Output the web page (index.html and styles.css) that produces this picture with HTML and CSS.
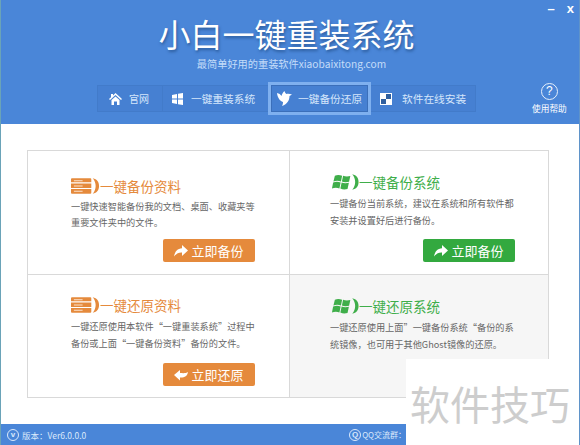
FILE: index.html
```html
<!DOCTYPE html>
<html lang="zh-CN">
<head>
  <meta charset="UTF-8">
  <title>小白一键重装系统</title>
  <link rel="stylesheet" href="styles.css">
</head>
<body>
  <svg class="sprites" width="0" height="0">
    <symbol id="ico-drive" viewBox="0 0 30 16">
      <path d="M1 0h19a1 1 0 0 1 1 1v3H0V1a1 1 0 0 1 1-1zM0 5.500h21V10H0zM0 11h21v4a1 1 0 0 1-1 1H1a1 1 0 0 1-1-1z" fill="#e58a3c"/>
      <path d="M3 2h9v1H3zM3 7.500h9v1H3zM3 13h9v1H3z" fill="#fbe3cd"/>
      <path d="M22.500 0c4.500 1 6.500 4 6.500 8s-2 7-6.500 8c2-2.500 3-5 3-8s-1-5.500-3-8z" fill="#e58a3c"/>
    </symbol>
    <symbol id="ico-flag" viewBox="0 0 30 16">
      <path d="M4 1.500c2.500-1.200 5-1 7.500 0l-1.200 6c-2.300-1-5-1.200-7.800 0zM12.500 1.500c2.300 1 5 1 7.500.3l-1.300 6c-2.500.7-5.400.7-7.400-.3zM2.200 8.500c2.800-1.200 5.500-1 7.800 0l-1.300 6.200c-2-1-5-1.200-7.700 0zM11 8.500c2 1 5 1 7.500.3l-1.400 6.400c-2.500.7-5.300.6-7.400-.5z" fill="#3fae4a"/>
      <path d="M22 0c4.500 1 6.500 4 6.500 8s-2 7-6.500 8c2-2.500 3-5 3-8s-1-5.500-3-8z" fill="#3fae4a"/>
    </symbol>
    <symbol id="ico-go" viewBox="0 0 14 12">
      <path d="M8 0l6 5.500L8 11V7.500C5 7.300 2.500 8.500 0 11.500 .8 6.500 3.500 3.500 8 3.200z" fill="#fff"/>
    </symbol>
    <symbol id="ico-back" viewBox="0 0 14 12">
      <path d="M6 1v3c3 .2 6 .5 8-1-.6 4-3.500 5.800-8 5.500V11.500L0 6z" fill="#fff"/>
    </symbol>
  </svg>

  <div class="window">
    <header class="top">
      <div class="win-btns"><span>–</span><span>x</span></div>
      <h1 class="logo">小白一键重装系统</h1>
      <p class="slogan">最简单好用的重装软件xiaobaixitong.com</p>
      <div class="nav-row">
        <nav class="nav">
          <a class="tab tab-home">
            <svg width="13" height="12" viewBox="0 0 13 12"><path d="M6.500 0L13 6l-1 1-5.500-5L1 7 0 6l2-1.800V1h2v1.400zM2.500 7l4-3.600 4 3.600v5H8V8.500H5V12H2.500z" fill="#fff"/></svg>
            官网
          </a>
          <a class="tab tab-sys">
            <svg width="11" height="12" viewBox="0 0 11 12"><path d="M0 2l5-1v4.500H0zM6 .8L11 0v5.500H6zM0 6.500h5V11l-5-1zM6 6.500h5V12l-5-.8z" fill="#fff"/></svg>
            一键重装系统
          </a>
          <a class="tab tab-active">
            <svg width="15" height="15" viewBox="0 0 15 15"><path d="M0 2c2 .4 3.500 1.400 4.500 3C5 3 6 1 7.500 0c.3 1.500 1 2.400 2 3 1.500-.4 3.500-.2 5.500.5l-2.500 1.500C12.500 9 10.500 13 5 15c.8-1.300 1-2.500 1-4C2.800 10 .5 6.500 0 2z" fill="#fff"/></svg>
            一键备份还原
          </a>
          <a class="tab tab-soft">
            <span class="checker"></span>
            软件在线安装
          </a>
        </nav>
        <div class="help">
          <span class="help-ico">?</span>
          <span class="help-txt">使用帮助</span>
        </div>
      </div>
    </header>

    <main class="main">
      <div class="board">
        <section class="cell cell-a">
          <h2 class="cell-title orange"><svg class="title-ico"><use href="#ico-drive"/></svg>一键备份资料</h2>
          <p class="cell-text">一键快速智能备份我的文档、桌面、收藏夹等<br>重要文件夹中的文件。</p>
          <a class="btn btn-orange"><svg width="14" height="12"><use href="#ico-go"/></svg>立即备份</a>
        </section>
        <section class="cell cell-b">
          <h2 class="cell-title green"><svg class="title-ico"><use href="#ico-flag"/></svg>一键备份系统</h2>
          <p class="cell-text">一键备份当前系统，建议在系统和所有软件都<br>安装并设置好后进行备份。</p>
          <a class="btn btn-green"><svg width="14" height="12"><use href="#ico-go"/></svg>立即备份</a>
        </section>
        <section class="cell cell-c">
          <h2 class="cell-title orange"><svg class="title-ico"><use href="#ico-drive"/></svg>一键还原资料</h2>
          <p class="cell-text">一键还原使用本软件“一键重装系统”过程中<br>备份或上面“一键备份资料”备份的文件。</p>
          <a class="btn btn-orange"><svg width="14" height="12"><use href="#ico-back"/></svg>立即还原</a>
        </section>
        <section class="cell cell-d">
          <h2 class="cell-title green"><svg class="title-ico"><use href="#ico-flag"/></svg>一键还原系统</h2>
          <p class="cell-text">一键还原使用上面”一键备份系统“备份的系<br>统镜像，也可用于其他Ghost镜像的还原。</p>
        </section>
      </div>
    </main>

    <footer class="bottom">
      <span class="ver"><i class="ring">v</i>版本：Ver6.0.0.0</span>
      <span class="qq"><i class="ring">Q</i>QQ交流群：</span>
    </footer>

    <!-- watermark pasted over the corner -->
    <div class="stamp">软件技巧</div>
  </div>
</body>
</html>
```

FILE: styles.css
```css
* {
    box-sizing: border-box;
}

body {
    margin: 0;
    font-family: "Noto Sans CJK SC", "Liberation Sans", sans-serif;
    background: #fff;
}

h1, h2, p {
    margin: 0;
    font-weight: normal;
}

.sprites {
    position: absolute;
}

.window {
    position: relative;
    width: 580px;
    height: 445px;
    display: flex;
    flex-direction: column;
    overflow: hidden;
    border-left: 1px solid #6aa3b8;
    border-right: 1px solid #5f93c9;
}

/* header */
.top {
    position: relative;
    height: 124px;
    margin: 0 -1px;
    padding-top: 14px;
    background: #4a86d8;
    color: #fff;
    text-align: center;
}

.win-btns {
    position: absolute;
    top: 1px;
    right: 6px;
    display: flex;
    gap: 12px;
    font: bold 13px "Liberation Sans", sans-serif;
    line-height: 16px;
}

.logo {
    font-size: 32px;
    line-height: 38px;
    padding-right: 7px;
    text-shadow: 1px 2px 3px #2c5c9c;
}

.slogan {
    margin-top: 5px;
    font-size: 10.2px;
    line-height: 14px;
    padding-left: 3px;
    color: #c4dcf8;
}

.nav-row {
    display: flex;
    align-items: flex-start;
    margin-top: 11px;
    padding-left: 97px;
}

.nav {
    display: flex;
    align-items: center;
    height: 27px;
    margin-top: 3px;
    background: #4680d2;
    border: 1px solid #427bca;
}

.tab {
    display: flex;
    align-items: center;
    height: 25px;
    font-size: 10.7px;
    color: #d5e6fb;
    white-space: nowrap;
}

.tab-home {
    width: 65px;
    padding-left: 11px;
    gap: 7px;
    font-size: 10px;
    border-right: 1px solid #427bca;
}

.tab-sys {
    width: 105px;
    padding-left: 9px;
    gap: 8px;
}

.tab-active {
    width: 103px;
    height: 33px;
    padding-left: 9px;
    gap: 6px;
    background: #4680d2;
    box-shadow: inset 0 0 0 3px #7fb0ef, inset 0 0 0 4px #3b6fba;
}

.tab-soft {
    width: 104px;
    padding-left: 9px;
    gap: 10px;
}

.checker {
    width: 12px;
    height: 12px;
    background: conic-gradient(#2f5f9f 0 25%, #fff 0 50%, #2f5f9f 0 75%, #fff 0);
    border: 1px solid #fff;
}

.help {
    display: flex;
    flex-direction: column;
    align-items: center;
    margin-left: 56px;
    margin-top: 1px;
}

.help-ico {
    width: 17px;
    height: 17px;
    border: 1px solid #e6f0fc;
    border-radius: 50%;
    font: 12px/15px "Liberation Sans", sans-serif;
}

.help-txt {
    margin-top: 3px;
    font-size: 8.7px;
    line-height: 11px;
    white-space: nowrap;
}

/* cards */
.main {
    height: 300px;
    padding: 26px 0 0 26px;
}

.board {
    display: grid;
    grid-template-columns: 262px 258px;
    grid-template-rows: 124px 122px;
    width: 522px;
    height: 248px;
    border: 1px solid #d9d9d9;
}

.cell {
    display: flex;
    flex-direction: column;
    padding-right: 33px;
}

.cell-a,
.cell-c {
    padding-left: 43px;
    padding-right: 34px;
    border-right: 1px solid #d9d9d9;
}

.cell-b,
.cell-d {
    padding-left: 40px;
}

.cell-a,
.cell-b {
    border-bottom: 1px solid #d9d9d9;
}

.cell-a { padding-top: 25px; }
.cell-b { padding-top: 21px; }
.cell-c { padding-top: 20px; }
.cell-d { padding-top: 21px; background: #f6f6f6; }

.cell-title {
    display: flex;
    align-items: center;
    height: 20px;
    font-size: 13.5px;
    line-height: 20px;
    white-space: nowrap;
}

.title-ico {
    width: 29px;
    height: 16px;
    flex: none;
}

.green .title-ico {
    margin-left: 1px;
    margin-right: -1px;
}

.orange { color: #e58a3c; }
.green { color: #3fae4a; }

.cell-text {
    margin-top: 3px;
    font-size: 9.2px;
    line-height: 17px;
    color: #666;
    white-space: nowrap;
}

.cell-a .cell-text {
    margin-top: 2px;
    line-height: 16px;
}

.btn {
    display: flex;
    align-items: center;
    justify-content: center;
    gap: 3px;
    align-self: flex-end;
    width: 92px;
    height: 23px;
    margin-top: 9px;
    border-radius: 2px;
    font-size: 13px;
    color: #fff;
}

.cell-b .btn { margin-top: 10px; }
.cell-c .btn { margin-top: 11px; }

.btn-orange { background: #e58a3c; }
.btn-green { background: #33a93f; }

/* footer */
.bottom {
    display: flex;
    align-items: center;
    justify-content: space-between;
    height: 21px;
    margin: 0 -1px;
    padding-left: 7px;
    background: #4a86d8;
    color: #dbe9fb;
    font-size: 8.5px;
}

.ver,
.qq {
    display: flex;
    align-items: center;
    gap: 3px;
}

.qq {
    gap: 1px;
    margin-right: 174px;
    font-size: 8px;
}

.ring {
    width: 12px;
    height: 12px;
    border: 1px solid #dbe9fb;
    border-radius: 50%;
    font: bold 8px/10px "Liberation Sans", sans-serif;
    text-align: center;
}

.stamp {
    position: absolute;
    right: -1px;
    bottom: 0;
    width: 174px;
    height: 86px;
    padding: 21px 0 0 4px;
    background: #fff;
    color: #cdcdcd;
    font-size: 40px;
    line-height: 46px;
    white-space: nowrap;
}
```
